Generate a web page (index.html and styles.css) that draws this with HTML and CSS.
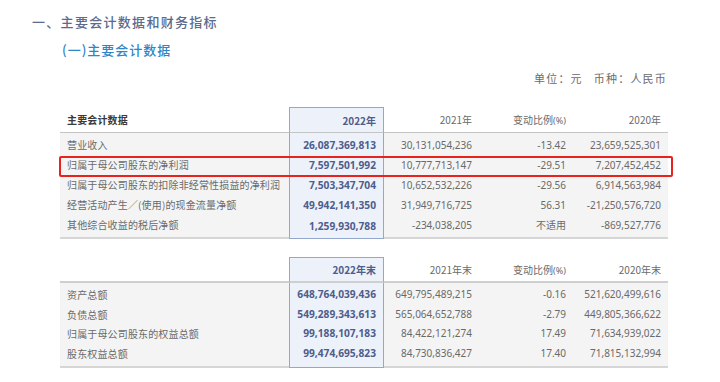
FILE: index.html
```html
<!DOCTYPE html>
<html lang="zh-CN">
<head>
<meta charset="utf-8">
<title>主要会计数据和财务指标</title>
<link rel="stylesheet" href="styles.css">
</head>
<body>
<div class="page">
  <h1 class="title">一、主要会计数据和财务指标</h1>
  <h2 class="subtitle">(一)主要会计数据</h2>
  <div class="unit">单位：元&nbsp;&nbsp;&nbsp;币种：人民币</div>

  <div class="table-wrap">
    <table class="fin t1">
      <colgroup><col class="c-label"><col class="c-num"><col class="c-num"><col class="c-pct"><col class="c-num"></colgroup>
      <thead>
        <tr><th class="label head-label">主要会计数据</th><th class="hl">2022年</th><th>2021年</th><th>变动比例<span class="pct">(%)</span></th><th>2020年</th></tr>
      </thead>
      <tbody>
        <tr class="first"><td class="label">营业收入</td><td class="hl">26,087,369,813</td><td>30,131,054,236</td><td>-13.42</td><td>23,659,525,301</td></tr>
        <tr><td class="label">归属于母公司股东的净利润</td><td class="hl">7,597,501,992</td><td>10,777,713,147</td><td>-29.51</td><td>7,207,452,452</td></tr>
        <tr><td class="label">归属于母公司股东的扣除非经常性损益的净利润</td><td class="hl">7,503,347,704</td><td>10,652,532,226</td><td>-29.56</td><td>6,914,563,984</td></tr>
        <tr><td class="label">经营活动产生／(使用)的现金流量净额</td><td class="hl">49,942,141,350</td><td>31,949,716,725</td><td>56.31</td><td>-21,250,576,720</td></tr>
        <tr class="last"><td class="label">其他综合收益的税后净额</td><td class="hl">1,259,930,788</td><td>-234,038,205</td><td class="cjk">不适用</td><td>-869,527,776</td></tr>
      </tbody>
    </table>
    <div class="red-box"></div>
  </div>

  <div class="table-wrap second">
    <table class="fin t2">
      <colgroup><col class="c-label"><col class="c-num"><col class="c-num"><col class="c-pct"><col class="c-num"></colgroup>
      <thead>
        <tr><th class="label"></th><th class="hl">2022年末</th><th>2021年末</th><th>变动比例<span class="pct">(%)</span></th><th>2020年末</th></tr>
      </thead>
      <tbody>
        <tr class="first"><td class="label">资产总额</td><td class="hl">648,764,039,436</td><td>649,795,489,215</td><td>-0.16</td><td>521,620,499,616</td></tr>
        <tr><td class="label">负债总额</td><td class="hl">549,289,343,613</td><td>565,064,652,788</td><td>-2.79</td><td>449,805,366,622</td></tr>
        <tr><td class="label">归属于母公司股东的权益总额</td><td class="hl">99,188,107,183</td><td>84,422,121,274</td><td>17.49</td><td>71,634,939,022</td></tr>
        <tr class="last"><td class="label">股东权益总额</td><td class="hl">99,474,695,823</td><td>84,730,836,427</td><td>17.40</td><td>71,815,132,994</td></tr>
      </tbody>
    </table>
  </div>
</div>
</body>
</html>
```

FILE: styles.css
```css
* { box-sizing: border-box; }
html, body { margin: 0; padding: 0; background: #ffffff; }
body {
  font-family: "Noto Sans", "Noto Sans CJK SC", sans-serif;
  color: #6a6a6a;
}
.page { padding-top: 12px; width: 720px; }

.title {
  margin: 0 0 0 32px;
  font-family: "Noto Sans CJK SC", sans-serif;
  font-size: 13px;
  font-weight: 500;
  line-height: 20px;
  letter-spacing: 1.3px;
  color: #5b6a8d;
}
.subtitle {
  margin: 8px 0 0 62px;
  font-family: "Noto Sans CJK SC", sans-serif;
  font-size: 13px;
  font-weight: 500;
  line-height: 20px;
  letter-spacing: 1px;
  color: #2f86c6;
}
.unit {
  margin-top: 8px;
  padding-right: 53px;
  text-align: right;
  font-family: "Noto Sans CJK SC", sans-serif;
  font-size: 11px;
  line-height: 20px;
  letter-spacing: 1.2px;
  color: #6b6b6b;
}

.table-wrap {
  position: relative;
  margin: 19px 0 0 60px;
  width: 608px;
}
.table-wrap.second { margin-top: 18px; }

.fin {
  width: 608px;
  table-layout: fixed;
  border-collapse: separate;
  border-spacing: 0;
  font-size: 10px;
}
.c-label { width: 229px; }
.c-num { width: 95px; }
.c-pct { width: 94px; }

.fin th, .fin td {
  padding: 0 7px 0 0;
  text-align: right;
  white-space: nowrap;
  font-weight: 400;
  color: #6a6a6a;
}
.fin .label {
  text-align: left;
  padding-left: 7px;
  font-family: "Noto Sans CJK SC", sans-serif;
  font-size: 10px;
  letter-spacing: 0.15px;
}
.fin th {
  height: 26px;
  background: #ffffff;
  font-family: "Noto Sans CJK SC", sans-serif;
  font-size: 10px;
  border-bottom: 1.5px solid #c4c4c4;
  vertical-align: middle;
}
.t2 th { border-bottom: 2px solid #cfcfcf; }
.fin th .pct { font-family: "Noto Sans", sans-serif; font-size: 9px; }
.fin th.head-label { font-weight: 700; color: #3a3a3a; }

.fin td {
  background: #f4f4f4;
  height: 20px;
  line-height: 20px;
  font-size: 10px;
}
.t2 td { height: 19.5px; line-height: 19.5px; }
.fin td.cjk { font-family: "Noto Sans CJK SC", sans-serif; }
.fin tr.first td { padding-top: 2px; height: 22px; }
.t2 tr.first td { height: 21.5px; }
.fin tr.last td { border-bottom: 2px solid #d6d6d6; padding-bottom: 2px; height: 24px; }
.t2 tr.last td { padding-bottom: 3px; height: 24.5px; }

.fin .hl {
  background: #edf1f9;
  border-left: 1.5px solid #94a7cc;
  border-right: 1.5px solid #94a7cc;
  color: #4d5d8c;
  font-weight: 700;
  font-size: 10.2px;
}
.fin th.hl { border-top: 1.5px solid #94a7cc; font-size: 10px; }
.fin tr.last td.hl { border-bottom: 1.5px solid #94a7cc; }

.red-box {
  position: absolute;
  left: -1px;
  top: 49px;
  width: 614px;
  height: 21px;
  border: 2px solid #e8231d;
  border-radius: 2px;
  pointer-events: none;
}
```
